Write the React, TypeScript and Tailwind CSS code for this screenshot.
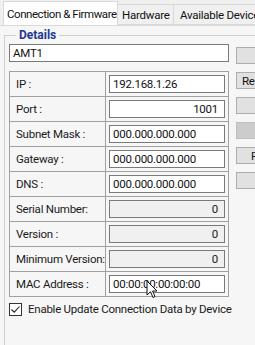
import React from "react";

const rows: { label: string; value: string; kind: "left" | "right" | "ro" }[] = [
  { label: "IP :", value: "192.168.1.26", kind: "left" },
  { label: "Port :", value: "1001", kind: "right" },
  { label: "Subnet Mask :", value: "000.000.000.000", kind: "left" },
  { label: "Gateway :", value: "000.000.000.000", kind: "left" },
  { label: "DNS :", value: "000.000.000.000", kind: "left" },
  { label: "Serial Number:", value: "0", kind: "ro" },
  { label: "Version :", value: "0", kind: "ro" },
  { label: "Minimum Version:", value: "0", kind: "ro" },
  { label: "MAC Address :", value: "00:00:00:00:00:00", kind: "left" },
];

function Field({ value, kind }: { value: string; kind: "left" | "right" | "ro" }) {
  if (kind === "ro") {
    return (
      <div className="h-[18px] w-[116px] border border-[#7a7a7a] bg-[#f0f0f0] flex items-center justify-end pr-[6px] text-[#202020]">
        {value}
      </div>
    );
  }
  return (
    <div
      className={
        "h-[18px] w-[116px] border border-[#7a7a7a] bg-white flex items-center text-[#111] " +
        (kind === "right" ? "justify-end pr-[6px]" : "justify-start pl-[3px]")
      }
    >
      {value}
    </div>
  );
}

export default function App() {
  return (
    <div
      className="relative w-[255px] h-[345px] overflow-hidden bg-[#f0f0f0] text-[11.5px] tracking-[-0.25px] leading-[14px] text-[#111]"
      style={{ fontFamily: "Roboto, 'Liberation Sans', sans-serif" }}
    >
      {/* Tab strip */}
      <div className="h-[25px] flex items-end pl-[3px] relative z-10 whitespace-nowrap">
        <div className="h-[24px] w-[115px] shrink-0 overflow-hidden bg-white border border-b-0 border-[#d9d9d9] pl-[3px] flex items-center tracking-[-0.45px]">
          Connection &amp; Firmware
        </div>
        <div className="h-[21px] w-[56px] shrink-0 bg-[#f0f0f0] border border-l-0 border-[#d9d9d9] flex items-center pl-[4px]">
          Hardware
        </div>
        <div className="h-[21px] w-[120px] shrink-0 bg-[#f0f0f0] border border-l-0 border-[#d9d9d9] flex items-center pl-[6px]">
          Available Devices
        </div>
      </div>

      {/* Tab page */}
      <div className="h-[320px] bg-[#f6f6f6] border-t border-[#d9d9d9] pt-[2px]">
        <fieldset className="ml-[4px] w-[300px] h-[330px] border-0 border-t border-l border-[#cfcfcf] pl-[4px] pt-[2px]">
          <legend className="ml-[7px] px-[3px] font-bold text-[12px] tracking-normal text-[#1f3694] leading-[14px]">Details</legend>
          <div className="flex gap-[7px]">
            <div className="w-[220px] flex flex-col">
              <div className="h-[18px] border border-[#7a7a7a] bg-white flex items-center pl-[3px]">AMT1</div>

              <div className="mt-[9px] grid grid-cols-[95px_122px] gap-px p-px bg-[#a0a0a0]">
                {rows.map((r) => (
                  <React.Fragment key={r.label}>
                    <div className="h-[24px] bg-[#f6f6f6] flex items-center pl-[6px] text-[#1a1a1a] whitespace-nowrap">
                      {r.label}
                    </div>
                    <div className="h-[24px] bg-[#f6f6f6] flex items-center pl-[3px]">
                      <Field value={r.value} kind={r.kind} />
                    </div>
                  </React.Fragment>
                ))}
              </div>

              <label className="mt-[5px] flex items-center gap-[6px] whitespace-nowrap text-[#1a1a1a]">
                <span className="w-[13px] h-[13px] border border-[#333] bg-white flex items-center justify-center">
                  <svg width="11" height="11" viewBox="0 0 11 11">
                    <path d="M1.5 5.5 L4.2 8.2 L9.5 2.5" fill="none" stroke="#222" strokeWidth="1.1" />
                  </svg>
                </span>
                Enable Update Connection Data by Device
              </label>
            </div>

            <div className="flex flex-col gap-[8px] pt-[3px]">
              <button className="h-[17px] w-[70px] bg-[#e1e1e1] border border-[#adadad]" />
              <button className="h-[17px] w-[70px] bg-[#e1e1e1] border border-[#adadad] text-left pl-[5px] leading-[14px]">
                Read
              </button>
              <button className="h-[17px] w-[70px] bg-[#e1e1e1] border border-[#adadad]" />
              <button className="h-[17px] w-[70px] bg-[#cccccc] border border-[#bfbfbf]" />
              <button className="h-[17px] w-[70px] bg-[#e1e1e1] border border-[#adadad] text-left pl-[14px] leading-[14px]">
                Find
              </button>
              <button className="h-[17px] w-[70px] bg-[#e1e1e1] border border-[#adadad]" />
            </div>
          </div>
        </fieldset>
      </div>

      {/* mouse cursor overlay */}
      <svg className="absolute left-[146px] top-[280px]" width="14" height="20" viewBox="0 0 14 20">
        <path d="M1 1 L1 15 L4.5 11.8 L7 17.5 L9 16.6 L6.6 11 L11 11 Z" fill="white" stroke="#111" strokeWidth="1" strokeLinejoin="round" />
      </svg>
    </div>
  );
}
